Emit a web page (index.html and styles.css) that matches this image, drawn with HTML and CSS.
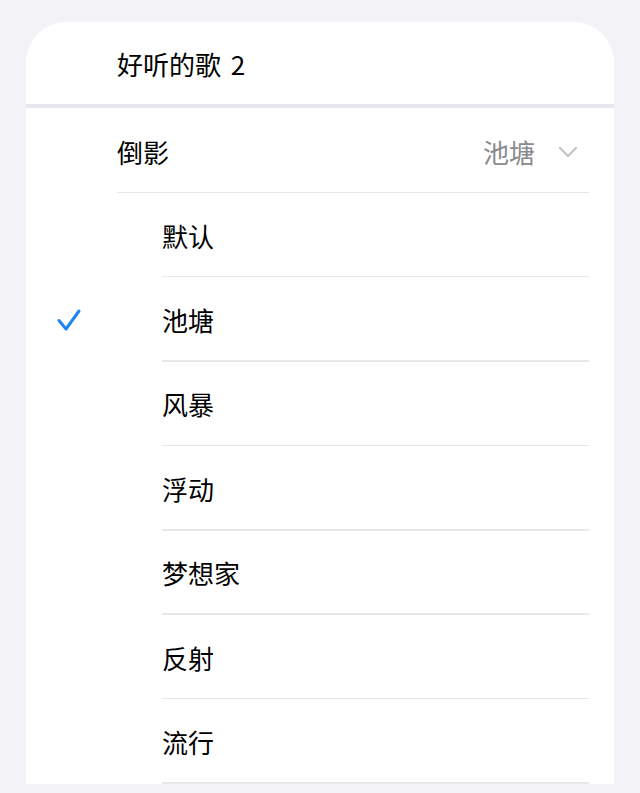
FILE: index.html
```html
<!DOCTYPE html>
<html lang="zh-CN">
<head>
<meta charset="utf-8">
<link rel="stylesheet" href="styles.css">
</head>
<body>
<div class="card">
  <div class="title-row"><span>好听的歌 2</span></div>
  <div class="group-sep"></div>
  <div class="picker-row">
    <span class="label">倒影</span>
    <span class="value">池塘</span>
    <svg class="chevron" width="20" height="12" viewBox="0 0 20 12"><path d="M2 2 L10 10 L18 2" fill="none" stroke="#c4c4c7" stroke-width="2.2" stroke-linecap="round" stroke-linejoin="round"/></svg>
  </div>
  <ul class="options">
    <li class="option"><span class="mark"></span><span class="opt-text">默认</span></li>
    <li class="option"><span class="mark"><svg width="26" height="24" viewBox="0 0 26 24"><path d="M3 12.5 L10 21 L23 3" fill="none" stroke="#1f85f5" stroke-width="3" stroke-linecap="round" stroke-linejoin="round"/></svg></span><span class="opt-text">池塘</span></li>
    <li class="option"><span class="mark"></span><span class="opt-text">风暴</span></li>
    <li class="option"><span class="mark"></span><span class="opt-text">浮动</span></li>
    <li class="option"><span class="mark"></span><span class="opt-text">梦想家</span></li>
    <li class="option"><span class="mark"></span><span class="opt-text">反射</span></li>
    <li class="option"><span class="mark"></span><span class="opt-text">流行</span></li>
  </ul>
</div>
</body>
</html>
```
FILE: styles.css
```css
* { box-sizing: border-box; }
html, body {
  margin: 0;
  padding: 0;
  background: #f2f2f7;
  height: 793px;
  overflow: hidden;
}
body {
  font-family: "Noto Sans CJK SC", "Noto Sans", sans-serif;
  color: #000;
  padding: 22px 26px 0 26px;
}
.card {
  background: #fff;
  border-radius: 40px 40px 0 0;
  overflow: hidden;
}
.title-row {
  height: 82px;
  display: flex;
  align-items: center;
  padding: 2px 0 0 91px;
  font-size: 26px;
  line-height: 1;
  word-spacing: 4px;
}
.group-sep {
  height: 4px;
  background: #e6e6eb;
}
.picker-row {
  height: 85px;
  margin-left: 91px;
  margin-right: 25px;
  display: flex;
  align-items: center;
  border-bottom: 1.5px solid #e8e8ea;
  font-size: 26px;
  line-height: 1;
  padding-top: 3px;
}
.picker-row .label { flex: 1; }
.picker-row .value { color: #8a8a8e; margin-right: -1px; }
.chevron { margin-left: 24px; margin-right: 11px; }
.options {
  list-style: none;
  margin: 0;
  padding: 0;
}
.option {
  height: 84.4px;
  display: flex;
  align-items: center;
  font-size: 26px;
  line-height: 1;
  position: relative;
}
.option::after {
  content: "";
  position: absolute;
  left: 136px;
  right: 25px;
  bottom: 0;
  height: 1.5px;
  background: #e8e8ea;
}
.mark {
  width: 136px;
  padding-left: 30px;
  display: flex;
  align-items: center;
}
.opt-text { padding-top: 1px; }
```
